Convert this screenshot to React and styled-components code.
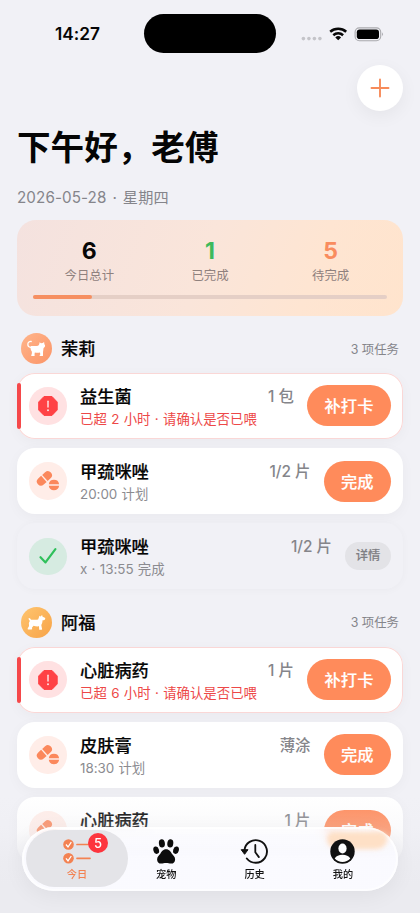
import React from 'react';
import styled, { createGlobalStyle, css } from 'styled-components';

const Global = createGlobalStyle`
  * { box-sizing: border-box; }
  body { margin: 0; background: #f1f1f6; }
  button { border: 0; padding: 0; font: inherit; }
`;

const Screen = styled.div`
  position: relative;
  width: 420px;
  height: 913px;
  overflow: hidden;
  background: #f1f1f6;
  color: #050505;
  font-family: Inter, "Noto Sans CJK SC", sans-serif;
`;

const StatusBar = styled.header`
  display: grid;
  grid-template-columns: 144px 132px 144px;
  align-items: center;
  height: 39px;
  margin-top: 14px;
`;
const Clock = styled.div`
  padding-left: 11px;
  text-align: center;
  font-size: 17.3px;
  font-weight: 600;
  line-height: 39px;
  letter-spacing: -0.05px;
`;
const Island = styled.div`
  height: 39px;
  border-radius: 20px;
  background: #000;
`;
const StatusIcons = styled.div`
  display: flex;
  align-items: center;
  padding-left: 25px;
`;

const Actions = styled.div`
  display: flex;
  justify-content: flex-end;
  padding: 11.5px 17px 0 0;
`;
const AddButton = styled.button`
  display: grid;
  place-items: center;
  width: 46px;
  height: 46px;
  border-radius: 50%;
  background: #fff;
  box-shadow: 0 5px 18px rgba(0, 0, 0, 0.055);
`;

const Content = styled.main`
  padding: 0 17px;
`;
const Title = styled.h1`
  margin: 15.5px 0 0;
  font-size: 33.6px;
  font-weight: 700;
  line-height: 44px;
`;
const DateLine = styled.p`
  margin: 18px 0 0;
  font-size: 15.2px;
  line-height: 20px;
  letter-spacing: 0.1px;
  word-spacing: 1.6px;
  color: #85858b;
`;

const Summary = styled.section`
  height: 96px;
  margin-top: 12px;
  padding: 17px 16px 0;
  border-radius: 19px;
  background: linear-gradient(110deg, #f4e2df 0%, #fae5da 48%, #fee5d2 75%, #ffe4cd 100%);
`;
const Stats = styled.div`
  display: grid;
  grid-template-columns: 1fr 1fr 1fr;
  column-gap: 8px;
`;
const Stat = styled.div`
  text-align: center;
`;
const StatValue = styled.div`
  font-size: 23px;
  font-weight: 700;
  line-height: 28px;
  color: ${(p) => p.$color};
`;
const StatLabel = styled.div`
  margin-top: 2px;
  font-size: 12.4px;
  line-height: 18px;
  color: #8f817e;
`;
const Track = styled.div`
  height: 4px;
  margin-top: 10px;
  border-radius: 2px;
  background: #e5cfc6;
`;
const Fill = styled.div`
  height: 4px;
  border-radius: 2px;
  background: #f68f61;
`;

const Group = styled.section`
  margin-top: ${(p) => (p.$first ? '17px' : '17.4px')};
`;
const GroupHead = styled.div`
  display: flex;
  align-items: center;
  height: 31px;
  padding: 0 4px;
`;
const Avatar = styled.div`
  width: 31px;
  height: 31px;
  border-radius: 50%;
  background: ${(p) => (p.$dog ? 'linear-gradient(135deg,#ffc56f,#f7a348)' : 'linear-gradient(135deg,#ffb58b,#fb9467)')};
`;
const PetName = styled.h2`
  flex: 1;
  margin: 0 0 0 9px;
  padding-top: 1px;
  font-size: 17.2px;
  font-weight: 500;
  line-height: 24px;
  -webkit-text-stroke: 0.2px currentColor;
`;
const Count = styled.span`
  font-size: 12.4px;
  color: #85858b;
`;

const Cards = styled.div`
  display: flex;
  flex-direction: column;
  gap: 9.3px;
  margin-top: 8.8px;
`;
const Card = styled.article`
  position: relative;
  display: flex;
  align-items: center;
  height: 66px;
  padding: 0 12px 0 12px;
  border-radius: 18px;
  background: #fff;
  box-shadow: 0 3px 14px rgba(0, 0, 0, 0.035);
  ${(p) => p.$state === 'late' && css`
    box-shadow: inset 0 0 0 1px #fad7d6, 0 3px 14px rgba(0, 0, 0, 0.035);
    &::before {
      content: '';
      position: absolute;
      left: -0.5px;
      top: 10.25px;
      width: 4.5px;
      height: 46px;
      border-radius: 2px;
      background: #f5484a;
    }
  `}
  ${(p) => p.$state === 'done' && css`
    background: #f1f1f6;
    box-shadow: 0 1px 9px rgba(0, 0, 0, 0.03);
  `}
`;
const IconDisc = styled.div`
  display: grid;
  place-items: center;
  flex: none;
  width: 37.5px;
  height: 37.5px;
  border-radius: 50%;
  background: ${(p) => ({ late: '#ffe1e2', plan: '#ffede8', done: '#d6ebe1' })[p.$state]};
`;
const Info = styled.div`
  flex: 1;
  min-width: 0;
  margin-left: 13.5px;
  padding-top: 3px;
`;
const TopLine = styled.div`
  display: flex;
  justify-content: space-between;
  align-items: center;
  height: 24px;
`;
const Med = styled.h3`
  margin: 0;
  font-size: 17.2px;
  font-weight: 500;
  line-height: 24px;
  -webkit-text-stroke: 0.2px currentColor;
`;
const Dose = styled.span`
  font-size: 15.4px;
  font-weight: 500;
  line-height: 24px;
  color: #85858a;
`;
const Note = styled.p`
  margin: 0;
  font-size: 13.4px;
  line-height: 21px;
  word-spacing: 0.6px;
  letter-spacing: ${(p) => (p.$late ? '0' : '-0.03px')};
  white-space: nowrap;
  color: ${(p) => (p.$late ? '#ed4848' : '#8b8b90')};
`;
const Action = styled.button`
  flex: none;
  width: ${(p) => p.$w}px;
  height: 41px;
  margin-left: 13px;
  border-radius: 21px;
  background: #ff8b5b;
  color: #fff;
  font-size: 16.3px;
  font-weight: 500;
  line-height: 42px;
  -webkit-text-stroke: 0.15px currentColor;
  ${(p) => p.$quiet && css`
    height: 28px;
    background: #e3e3e7;
    color: #7f7f84;
    font-size: 12.3px;
    line-height: 28px;
  `}
`;

const BottomFade = styled.div`
  position: absolute;
  left: 0;
  right: 0;
  bottom: 0;
  height: 116px;
  background: linear-gradient(rgba(238, 238, 243, 0), rgba(236, 236, 241, 0.25) 28%, rgba(235, 235, 240, 0.75) 52%, #ebebf0 75%);
`;
const TabBar = styled.nav`
  position: absolute;
  left: 22px;
  top: 827px;
  display: flex;
  align-items: center;
  width: 376px;
  height: 63.5px;
  padding: 0 4px;
  border-radius: 32px;
  background: linear-gradient(rgba(252, 252, 254, 0.86), rgba(250, 250, 254, 0.9) 35%, rgba(250, 250, 255, 0.96) 50%);
  box-shadow: inset 0 0 0 2px rgba(255, 255, 255, 0.75), 0 5px 22px rgba(0, 0, 0, 0.055);
  backdrop-filter: blur(5px);
  /* Refraction of the button that scrolls beneath the glass. */
  &::before {
    content: '';
    position: absolute;
    left: 305px;
    top: 5px;
    width: 60px;
    height: 17px;
    border-radius: 8px 8px 12px 12px;
    background: #fee0c6;
    filter: blur(2px);
  }
`;
const Tab = styled.button`
  display: flex;
  flex-direction: column;
  align-items: center;
  justify-content: center;
  position: relative;
  flex: none;
  width: ${(p) => (p.$active ? '102px' : '88.4px')};
  height: 57px;
  margin: ${(p) => (p.$active ? '0 -6px 0 0' : '0')};
  padding-top: 2px;
  border-radius: 29px;
  background: ${(p) => (p.$active ? '#e4e4e8' : 'transparent')};
  color: ${(p) => (p.$active ? '#f38252' : '#111')};
  svg { display: block; }
`;
const TabLabel = styled.span`
  margin-top: 1px;
  font-size: 10.2px;
  font-weight: 500;
  line-height: 16px;
`;
const Badge = styled.span`
  position: absolute;
  left: 62px;
  top: 2.5px;
  width: 20px;
  height: 20px;
  border-radius: 50%;
  background: #fd353e;
  color: #fff;
  text-align: center;
  font-size: 13px;
  font-weight: 500;
  line-height: 20px;
`;

const StatusGlyphs = () => (
  <svg width="86" height="20" viewBox="0 0 86 20">
    <g fill="#c4c4c9">
      <circle cx="2.4" cy="14.6" r="1.8" /><circle cx="7.9" cy="14.6" r="1.8" />
      <circle cx="13.4" cy="14.6" r="1.8" /><circle cx="18.9" cy="14.6" r="1.8" />
    </g>
    <g fill="none" stroke="#080808" strokeWidth="2.5">
      <path d="M29.2 7.8a12.1 12.1 0 0 1 16 0" />
      <path d="M32.3 11.2a7.3 7.3 0 0 1 9.8 0" />
    </g>
    <path d="M34.3 13.4a4.3 4.3 0 0 1 5.8 0l-2.9 2.9z" fill="#080808" />
    <rect x="54.1" y="3.9" width="25.6" height="12.8" rx="4.2" fill="none" stroke="#a9a9ad" strokeWidth="1.1" />
    <rect x="55.8" y="5.5" width="22.2" height="9.6" rx="2.8" fill="#000" />
    <path d="M81.2 8.3q1.8 1.9 0 3.9z" fill="#9b9ba0" />
  </svg>
);

const CatIcon = () => (
  <svg width="31" height="31" viewBox="0 0 31 31">
    <path d="M11 14.4H9.8C7.5 14 6.7 12.4 6.9 10.8 7 9.1 8.4 8.3 10.2 8.5" fill="none" stroke="#fff" strokeWidth="1.3" strokeLinecap="round" />
    <path fill="#fff" d="M9.3 13.4C11 12.6 14.5 13.6 17 12.7c1-.5 1.4-1.6 1.6-3.5l1.4 1 1.6-.1 1.5-1.1.3 2.3c.9.8.9 2.2.1 2.9-.7.5-1.1.8-1.1 1.8-.1 1.400-.3 2.100-.4 3.200v2.900c.1.6 0 1-.6 1h-2.700v-1.200l.6-.3-.3-2.200c-1.900.4-3.600.3-5.100 0l-.4 1.500.2 1.400c.1.500-.1.800-.5.800h-2.900v-1.400l.5-.5.1-2.400c-1-1.600-1.800-3.900-1.200-5.400z" />
  </svg>
);

const DogIcon = () => (
  <svg width="31" height="31" viewBox="0 0 31 31">
    <path fill="#fff" d="M7.700 11.100c.9-.3 1.700.7 2.300 1.700 2.100-.3 4.700.4 7.100-.4.5-1 .9-2.300 1.300-3.700l1.100.8 1.600-1.500.5 1.800 1.700.7c.7.1 1.100.5.9 1.200-.3 1.200-1.200 1.700-2.600 1.600-.2 1.700-.3 3.300-1.300 4.600l.4 2.300.4 1.700c.1.5-.1.8-.6.8h-2.300l-.2-3.400c-1.800.2-3.700 0-5.500-.5l-1.600 1.900.2.900c.2.5 0 .9-.6.9H6.800l-.1-1.500c1.200-1 1.600-2.400 1.200-3.700-.1-1.400.2-2.400 1-3.300-.7-.7-1.500-1.600-1.200-2.900z" />
  </svg>
);

const AlertIcon = () => (
  <svg width="22" height="22" viewBox="0 0 22 22">
    <path d="M7 1.500h8L20.200 7v8L15 20.400H7L1.700 15V7z" fill="#ff4245" stroke="#ff4245" strokeLinejoin="round" />
    <path d="M11 6.300v5.800" stroke="#ffe0e0" strokeWidth="1.500" strokeLinecap="round" />
    <circle cx="11" cy="15.200" r="1" fill="#ffe0e0" />
  </svg>
);

const PillsIcon = () => (
  <svg width="26" height="24" viewBox="0 0 26 24">
    <g fill="#fb885c">
      <g transform="rotate(-42 9.4 9.4)">
        <path d="M8.700 5.300H4.800a4.100 4.100 0 0 0 0 8.200h3.900zM10.100 5.300h3.900a4.100 4.100 0 0 1 0 8.200h-3.900z" />
      </g>
      <path d="M13.800 15.200a5.200 5.200 0 0 1 10.300 0zM13.800 16.700a5.200 5.200 0 0 0 10.300 0z" />
    </g>
  </svg>
);

const CheckIcon = () => (
  <svg width="20" height="20" viewBox="0 0 20 20">
    <path d="M2.500 11.200l5 5.200L17.400 3.200" fill="none" stroke="#2fc05b" strokeWidth="2.200" strokeLinecap="round" strokeLinejoin="round" />
  </svg>
);

const TodayIcon = () => (
  <svg width="30" height="27" viewBox="0 0 30 27">
    <g fill="#f38252"><circle cx="6.500" cy="6.500" r="5.300" /><circle cx="6.500" cy="20.300" r="5.300" /></g>
    <g fill="none" stroke="#fff" strokeWidth="1.300"><path d="M4 6.500L6 9l3.300-4.800M4 20.300L6 22.800l3.300-4.800" /></g>
    <path d="M15 6.500h13M15 20.300h13" stroke="#f38252" strokeWidth="1.700" strokeLinecap="round" />
  </svg>
);

const PawIcon = () => (
  <svg width="28" height="27" viewBox="0 0 28 27">
    <g fill="#0c0c0c">
      <ellipse cx="9.900" cy="5.400" rx="3" ry="4.200" transform="rotate(-7 9.9 5.4)" />
      <ellipse cx="18.300" cy="5.400" rx="3" ry="4.200" transform="rotate(7 18.3 5.4)" />
      <ellipse cx="4.200" cy="12.200" rx="2.800" ry="3.800" transform="rotate(-16 4.2 12.2)" />
      <ellipse cx="24" cy="12.200" rx="2.800" ry="3.800" transform="rotate(16 24 12.2)" />
      <path d="M14.100 11.300c3.200 0 4.600 2.400 6 4.800 1 1.500 3 2.600 3 5.300 0 2.400-1.600 4.200-4 4.200-1.800 0-3-.5-5-.5s-3.200.5-5 .5c-2.400 0-4-1.800-4-4.200 0-2.700 2-3.800 3-5.300 1.400-2.400 2.800-4.800 6-4.800z" />
    </g>
  </svg>
);

const HistoryIcon = () => (
  <svg width="30" height="27" viewBox="0 0 30 27">
    <path d="M4.400 12.500a11.300 11.300 0 1 1 2.400 8" fill="none" stroke="#111" strokeWidth="1.900" strokeLinecap="round" />
    <path d="M1.200 11.700h6.800l-3.400 4.600z" fill="#111" stroke="#111" strokeLinejoin="round" />
    <path d="M15.300 7v7.300l3.600 4.800" fill="none" stroke="#111" strokeWidth="1.800" strokeLinecap="round" strokeLinejoin="round" />
  </svg>
);

const ProfileIcon = () => (
  <svg width="27" height="27" viewBox="0 0 27 27">
    <circle cx="13.500" cy="13.500" r="12.200" fill="#111" />
    <ellipse cx="13.500" cy="10.500" rx="4.100" ry="4.900" fill="#fff" />
    <path d="M5.700 20.500c1.500-2.400 4.200-3.700 7.800-3.700s6.300 1.300 7.800 3.700a10.500 10.500 0 0 1-15.600 0z" fill="#fff" />
  </svg>
);

const discIcon = { late: <AlertIcon />, plan: <PillsIcon />, done: <CheckIcon /> };
const actions = { late: ['补打卡', 84], plan: ['完成', 67.5], done: ['详情', 46] };

const groups = [
  { name: '茉莉', tasks: [
    { name: '益生菌', dose: '1 包', note: '已超 2 小时 · 请确认是否已喂', state: 'late' },
    { name: '甲巯咪唑', dose: '1/2 片', note: '20:00 计划', state: 'plan' },
    { name: '甲巯咪唑', dose: '1/2 片', note: 'x · 13:55 完成', state: 'done' },
  ] },
  { name: '阿福', dog: true, tasks: [
    { name: '心脏病药', dose: '1 片', note: '已超 6 小时 · 请确认是否已喂', state: 'late' },
    { name: '皮肤膏', dose: '薄涂', note: '18:30 计划', state: 'plan' },
    { name: '心脏病药', dose: '1 片', note: '', state: 'plan' },
  ] },
];

const stats = [
  ['6', '今日总计', '#080808'],
  ['1', '已完成', '#3dba5c'],
  ['5', '待完成', '#f98c5e'],
];

const Task = ({ task }) => {
  const [label, width] = actions[task.state];
  return (
    <Card $state={task.state}>
      <IconDisc $state={task.state}>{discIcon[task.state]}</IconDisc>
      <Info>
        <TopLine><Med>{task.name}</Med><Dose>{task.dose}</Dose></TopLine>
        <Note $late={task.state === 'late'}>{task.note || '\u00a0'}</Note>
      </Info>
      <Action $w={width} $quiet={task.state === 'done'}>{label}</Action>
    </Card>
  );
};

export default function App() {
  return (
    <>
      <Global />
      <Screen>
        <StatusBar>
          <Clock>14:27</Clock>
          <Island />
          <StatusIcons><StatusGlyphs /></StatusIcons>
        </StatusBar>
        <Actions>
          <AddButton aria-label="添加">
            <svg width="20" height="20" viewBox="0 0 20 20">
              <path d="M10 1.500v17M1.500 10h17" stroke="#f78b5a" strokeWidth="1.900" strokeLinecap="round" />
            </svg>
          </AddButton>
        </Actions>
        <Content>
          <Title>下午好，老傅</Title>
          <DateLine>2026-05-28 · 星期四</DateLine>
          <Summary>
            <Stats>
              {stats.map(([value, label, color]) => (
                <Stat key={label}><StatValue $color={color}>{value}</StatValue><StatLabel>{label}</StatLabel></Stat>
              ))}
            </Stats>
            <Track><Fill style={{ width: `${(1 / 6) * 100}%` }} /></Track>
          </Summary>
          {groups.map((g, i) => (
            <Group key={g.name} $first={i === 0}>
              <GroupHead>
                <Avatar $dog={g.dog}>{g.dog ? <DogIcon /> : <CatIcon />}</Avatar>
                <PetName>{g.name}</PetName>
                <Count>3 项任务</Count>
              </GroupHead>
              <Cards>{g.tasks.map((t, n) => <Task key={n} task={t} />)}</Cards>
            </Group>
          ))}
        </Content>
        <BottomFade />
        <TabBar>
          <Tab $active><TodayIcon /><TabLabel>今日</TabLabel><Badge>5</Badge></Tab>
          <Tab><PawIcon /><TabLabel>宠物</TabLabel></Tab>
          <Tab><HistoryIcon /><TabLabel>历史</TabLabel></Tab>
          <Tab><ProfileIcon /><TabLabel>我的</TabLabel></Tab>
        </TabBar>
      </Screen>
    </>
  );
}
